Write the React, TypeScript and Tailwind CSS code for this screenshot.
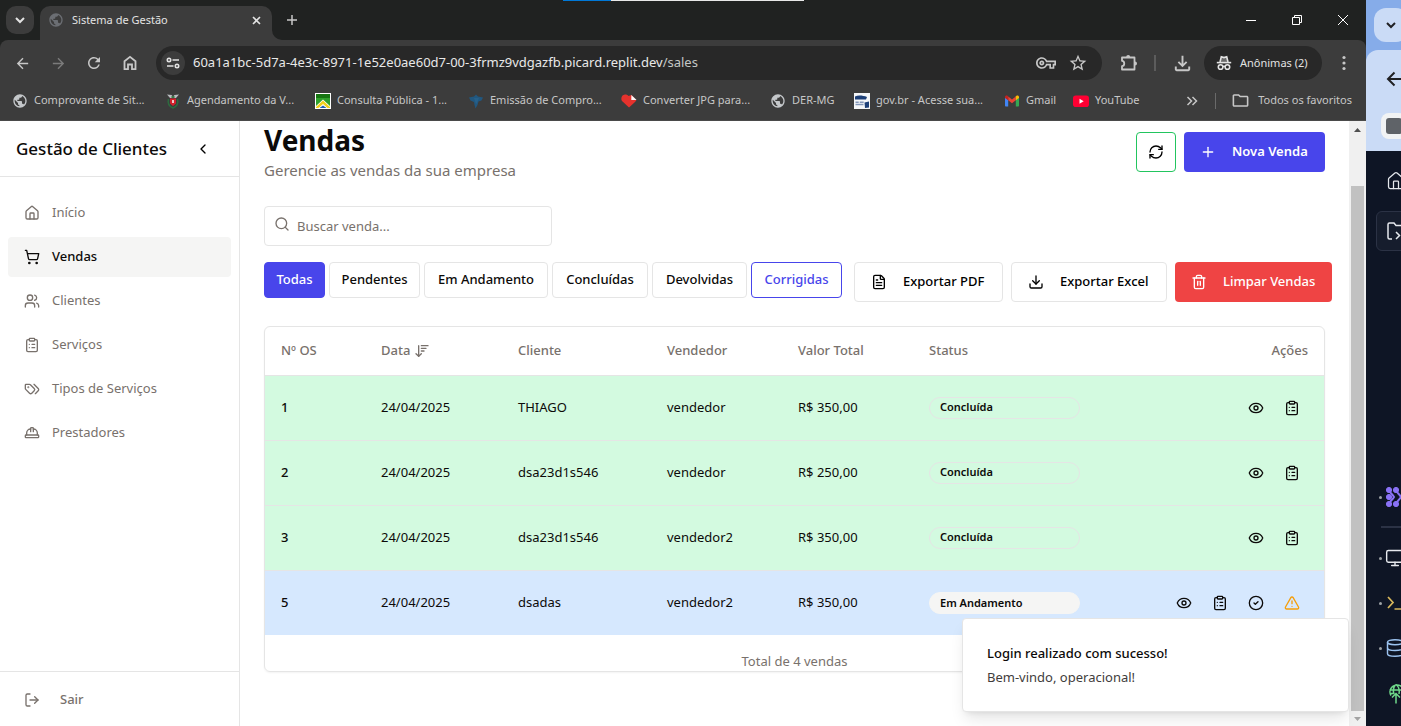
import React from "react";
import {
  ArrowDownWideNarrow,
  ChevronLeft,
  CircleCheck,
  ClipboardList,
  Database,
  Download,
  Eye,
  FileText,
  HardHat,
  House,
  LogOut,
  Monitor,
  Plus,
  RefreshCw,
  Search,
  ShoppingCart,
  Trash2,
  TriangleAlert,
  Users,
} from "lucide-react";
import {
  MdArrowBack,
  MdArrowForward,
  MdOutlineFileDownload,
  MdOutlineFolder,
  MdOutlineVpnKey,
  MdPublic,
  MdRefresh,
  MdStarBorder,
} from "react-icons/md";

function ChevronDownBold() {
  return (
    <svg width="12" height="12" viewBox="0 0 12 12" fill="none" stroke="currentColor" strokeWidth="2">
      <path d="M2 4 6 8l4-4" />
    </svg>
  );
}

function HomeGlyph() {
  return (
    <svg width="14" height="16" viewBox="0 0 14 16" fill="none" stroke="currentColor" strokeWidth="1.800">
      <path d="M1.500 6.200 7 1.800l5.500 4.400v8H9V9.500H5v4.700H1.500z" />
    </svg>
  );
}

function PuzzleGlyph() {
  return (
    <svg width="18" height="18" viewBox="0 0 18 18" fill="none" stroke="currentColor" strokeWidth="1.800" strokeLinejoin="round">
      <path d="M2 3.500h12.500v12H2v-3.300c3 0 3-5.400 0-5.400z" />
      <path d="M6.200 3a2 2 0 0 1 4 0zM15 7.500a2 2 0 0 1 0 4z" fill="currentColor" stroke="none" />
    </svg>
  );
}

function TagsIcon({ size = 16 }: { size?: number }) {
  return (
    <svg width={size} height={size} viewBox="0 0 24 24" fill="none" stroke="currentColor" strokeWidth="2" strokeLinecap="round" strokeLinejoin="round">
      <path d="m15 5 6.300 6.300a2.400 2.400 0 0 1 0 3.400L17 19" />
      <path d="M9.586 5.586A2 2 0 0 0 8.172 5H3a1 1 0 0 0-1 1v5.172a2 2 0 0 0 .586 1.414L8.290 18.290a2.426 2.426 0 0 0 3.420 0l3.580-3.580a2.426 2.426 0 0 0 0-3.420z" />
      <circle cx="6.500" cy="9.500" r=".5" fill="currentColor" />
    </svg>
  );
}

function SiteSettingsGlyph() {
  return (
    <svg width="14" height="12" viewBox="0 0 14 12" fill="none" stroke="currentColor" strokeWidth="1.600">
      <circle cx="3" cy="3" r="1.700" />
      <path d="M6.500 3H13M1 9h6.500" />
      <circle cx="11" cy="9" r="1.700" />
    </svg>
  );
}

function IncognitoGlyph() {
  return (
    <svg width="16" height="16" viewBox="0 0 16 16" fill="none" stroke="currentColor" strokeWidth="1.600">
      <path d="M4 7 5.300 1.800 8 2.600l2.700-.8L12 7" fill="currentColor" fillOpacity="0.35" />
      <path d="M.8 7.600h14.400" />
      <circle cx="4.600" cy="12" r="2.300" />
      <circle cx="11.400" cy="12" r="2.300" />
      <path d="M6.900 11.600c.7-.5 1.500-.5 2.200 0" />
    </svg>
  );
}

function CrestIcon() {
  return (
    <svg width="16" height="16" viewBox="0 0 16 16">
      <path d="M2 1.500 6.500 2 8 3.500 9.500 2 14 1.500 11 5H5z" fill="#b9bcbf" />
      <path d="M3.500 6C2.500 10 4 13.500 8 15c4-1.500 5.500-5 4.500-9" fill="none" stroke="#2d6b3f" strokeWidth="1.500" />
      <path d="M5 5.500h6v5L8 13l-3-2.500z" fill="#d3202b" />
      <path d="M7 7h2v3H7z" fill="#f0c8c8" />
      <path d="M6.500 3h3v2h-3z" fill="#3a7a4a" />
    </svg>
  );
}

function RoadIcon() {
  return (
    <svg width="16" height="16" viewBox="0 0 16 16">
      <path d="M0 0h16v16H0z" fill="#fff" />
      <path d="M1 1h14v14H1z" fill="#2fa12b" />
      <path d="M1 1h14v4H1z" fill="#167512" />
      <path d="M1 13 8 6.500l7 6.500v2H1z" fill="#fff" />
      <path d="M1 14 8 7.500l7 6.500v1h-2.500L8 11l-4.500 4H1z" fill="#f2d21b" />
      <path d="M4.500 15 8 12.600l3.500 2.400z" fill="#1f5fae" />
    </svg>
  );
}

function BlueMapIcon() {
  return (
    <svg width="16" height="16" viewBox="0 0 16 16">
      <path d="M1 4.500 6 3.500 8 1.500l2 2 5 1-1.500 3-3 1L9.500 12 7.500 15.500 6.500 12 6 9 2.500 7.500z" fill="#21577f" />
      <path d="M6 5h5l-2 5-1 1z" fill="#27608a" />
    </svg>
  );
}

function HeartIcon() {
  return (
    <svg width="16" height="16" viewBox="0 0 16 16">
      <path d="M8 14.500 1 8C-.5 6 .5 1.500 4 1.500c2 0 2.500.5 3.500 1.500l3-1 4.800 5c0 .8-.8 1.500-1.300 2z" fill="#e5322d" />
      <path d="M10.300 2 15.600 7h-5.300z" fill="#f7f7f7" />
    </svg>
  );
}

function GovIcon() {
  return (
    <svg width="16" height="16" viewBox="0 0 16 16">
      <path d="M0 0h16v16H0z" fill="#f4f6f8" />
      <path d="M1 3.500C4 2 9 2.500 13 4l-1 2.500H1z" fill="#1c3f78" />
      <path d="M1.500 9.200h3.200M5.700 9.200h4M1.500 11.500h8" stroke="#8296b8" strokeWidth="1.400" />
      <path d="M10.500 9.500 15 8.500v6l-4 .5z" fill="#1c3f78" />
    </svg>
  );
}

function GmailIcon() {
  return (
    <svg width="16" height="16" viewBox="0 0 16 16">
      <path d="M1 4.200v8.600c0 .4.300.7.700.7H4.200V6.800z" fill="#4285f4" />
      <path d="M15 4.200v8.600c0 .4-.3.700-.7.700h-2.500V6.800z" fill="#34a853" />
      <path d="M4.200 3.600 8 6.500l3.800-2.900v3.600L8 10.200 4.200 7.200z" fill="#ea4335" />
      <path d="M1 5V4c0-1.300 1.500-2 2.500-1.200l.7.600v3.800z" fill="#c5221f" />
      <path d="M15 5V4c0-1.300-1.500-2-2.500-1.200l-.7.600v3.800z" fill="#fbbc04" />
    </svg>
  );
}

function YouTubeIcon() {
  return (
    <svg width="16" height="16" viewBox="0 0 16 16">
      <rect y="2.500" width="16" height="11.500" rx="2.800" fill="#ff0033" />
      <path d="M6.500 5.800v5l4.200-2.500z" fill="#fff" />
    </svg>
  );
}

const globe = <MdPublic size={16} className="text-[#c4c7ca]" />;

const bookmarks = [
  { label: "Comprovante de Sit...", icon: globe, width: "w-[153px]" },
  { label: "Agendamento da V...", icon: <CrestIcon />, width: "w-[150px]" },
  { label: "Consulta Pública - 1...", icon: <RoadIcon />, width: "w-[153px]" },
  { label: "Emissão de Compro...", icon: <BlueMapIcon />, width: "w-[153px]" },
  { label: "Converter JPG para...", icon: <HeartIcon />, width: "w-[149px]" },
  { label: "DER-MG", icon: globe, width: "w-[84px]" },
  { label: "gov.br - Acesse sua...", icon: <GovIcon />, width: "w-[150px]" },
  { label: "Gmail", icon: <GmailIcon />, width: "w-[69px]" },
  { label: "YouTube", icon: <YouTubeIcon />, width: "w-[80px]" },
];

function TabStrip() {
  return (
    <div className="flex h-10 shrink-0 items-stretch bg-[#202221]">
      <button aria-label="Pesquisar guias" className="ml-1.5 mt-1.5 flex size-7 items-center justify-center rounded-[10px] bg-[#3c3c3c] text-[#e3e3e3]">
        <ChevronDownBold />
      </button>
      <div className="ml-1.5 mt-1.5 flex w-[232px] items-center rounded-t-[10px] bg-[#3c3c3c] px-2 pb-1.5">
        <MdPublic size={16} className="text-[#6b6e73]" />
        <span className="ml-2 flex-1 text-[11px] text-[#e3e3e3]">Sistema de Gestão</span>
        <button aria-label="Fechar guia" className="flex size-4 items-center justify-center text-[#e3e3e3]">
          <svg width="9" height="9" viewBox="0 0 9 9" stroke="currentColor" strokeWidth="1.600">
            <path d="m1 1 7 7M8 1 1 8" />
          </svg>
        </button>
      </div>
      <svg width="10" height="10" viewBox="0 0 10 10" className="self-end">
        <path d="M0 0v10h10A10 10 0 0 1 0 0z" fill="#3c3c3c" />
      </svg>
      <button aria-label="Nova guia" className="flex w-5 items-center justify-center text-[#c7c7c7]">
        <svg width="12" height="12" viewBox="0 0 12 12" stroke="currentColor" strokeWidth="1.500">
          <path d="M6 1v10M1 6h10" />
        </svg>
      </button>
      <div className="flex-1" />
      <button aria-label="Minimizar" className="flex w-[46px] items-center justify-center">
        <svg width="10" height="10" viewBox="0 0 10 10" stroke="#fff" fill="none">
          <path d="M0 5.500h10" />
        </svg>
      </button>
      <button aria-label="Restaurar" className="flex w-[46px] items-center justify-center">
        <svg width="10" height="10" viewBox="0 0 10 10" stroke="#fff" fill="none">
          <path d="M.5 2.500h7v7h-7zM2.500 2.500v-2h7v7h-2" />
        </svg>
      </button>
      <button aria-label="Fechar" className="flex w-[46px] items-center justify-center">
        <svg width="10" height="10" viewBox="0 0 10 10" stroke="#fff" fill="none">
          <path d="m0 0 10 10M10 0 0 10" />
        </svg>
      </button>
    </div>
  );
}

function Toolbar() {
  return (
    <div className="flex h-[46px] shrink-0 items-center rounded-t-lg bg-[#3c3c3c] pl-1 text-[#c7c7c7]">
      <button aria-label="Voltar" className="flex w-9 justify-center"><MdArrowBack size={17} /></button>
      <button aria-label="Avançar" className="flex w-9 justify-center text-[#7b7b7b]"><MdArrowForward size={17} /></button>
      <button aria-label="Recarregar" className="flex w-9 justify-center"><MdRefresh size={18} /></button>
      <button aria-label="Página inicial" className="flex w-9 justify-center"><HomeGlyph /></button>
      <div className="ml-2 flex h-[34px] flex-1 items-center rounded-full bg-[#282828] pl-[5px] pr-3.5">
        <button aria-label="Informações do site" className="flex size-6 items-center justify-center rounded-full bg-[#3c3c3c] text-[#e3e3e3]">
          <SiteSettingsGlyph />
        </button>
        <span className="ml-2 flex-1 text-[13px] text-[#c4c7c5]">
          <span className="text-[#e8e8e8]">60a1a1bc-5d7a-4e3c-8971-1e52e0ae60d7-00-3frmz9vdgazfb.picard.replit.dev</span>/sales
        </span>
        <MdOutlineVpnKey size={20} />
        <MdStarBorder size={20} className="ml-3" />
      </div>
      <button aria-label="Extensões" className="ml-[18px]"><PuzzleGlyph /></button>
      <span className="ml-4 h-4 w-0.5 bg-[#5c5c5c]" />
      <button aria-label="Downloads" className="ml-[15px]"><MdOutlineFileDownload size={23} /></button>
      <button className="ml-2.5 flex h-[34px] w-[118px] items-center gap-2 rounded-full bg-[#282828] pl-3 text-[11px] text-[#e3e3e3]">
        <IncognitoGlyph />
        Anônimas (2)
      </button>
      <button aria-label="Menu" className="flex w-11 justify-center">
        <svg width="4" height="16" viewBox="0 0 4 16" fill="currentColor">
          <circle cx="2" cy="2.500" r="1.600" />
          <circle cx="2" cy="8" r="1.600" />
          <circle cx="2" cy="13.500" r="1.600" />
        </svg>
      </button>
    </div>
  );
}

function BookmarkBar() {
  return (
    <div className="flex h-[35px] shrink-0 items-center border-b border-[#4a4a4a] bg-[#3c3c3c] pb-[5px] pl-3 text-[11px] text-[#c7c7c7]">
      {bookmarks.map((b) => (
        <a key={b.label} href="#" className={"flex shrink-0 items-center gap-1.5 whitespace-nowrap " + b.width}>
          {b.icon}
          {b.label}
        </a>
      ))}
      <div className="flex-1" />
      <button aria-label="Mais favoritos" className="mr-[17px]">
        <svg width="12" height="10" viewBox="0 0 12 10" fill="none" stroke="currentColor" strokeWidth="1.500">
          <path d="m1.500 1 4 4-4 4M6.500 1l4 4-4 4" />
        </svg>
      </button>
      <span className="h-4 w-px bg-[#6a6a6a]" />
      <button className="ml-[15px] mr-3.5 flex items-center gap-2">
        <MdOutlineFolder size={19} />
        Todos os favoritos
      </button>
    </div>
  );
}

const navItems = [
  { label: "Início", Icon: House, active: false },
  { label: "Vendas", Icon: ShoppingCart, active: true },
  { label: "Clientes", Icon: Users, active: false },
  { label: "Serviços", Icon: ClipboardList, active: false },
  { label: "Tipos de Serviços", Icon: TagsIcon, active: false },
  { label: "Prestadores", Icon: HardHat, active: false },
];

function Sidebar() {
  return (
    <aside className="flex w-60 shrink-0 flex-col border-r border-[#e5e5e5] bg-white">
      <div className="flex h-14 items-center justify-between border-b border-[#e5e5e5] pl-4 pr-7">
        <span className="text-[17px] font-medium text-[#0c0a09]">Gestão de Clientes</span>
        <button aria-label="Recolher menu"><ChevronLeft size={16} /></button>
      </div>
      <nav className="flex flex-1 flex-col gap-1 px-2 py-4">
        {navItems.map(({ label, Icon, active }) => (
          <a
            key={label}
            href="#"
            className={
              "flex h-10 items-center gap-3 rounded px-4 text-[13px] " +
              (active ? "bg-[#f5f5f4] font-medium text-[#0c0a09]" : "text-[#78716c]")
            }
          >
            <Icon size={16} />
            {label}
          </a>
        ))}
      </nav>
      <div className="border-t border-[#e5e5e5] px-2 pb-1.5 pt-2">
        <button className="flex h-10 w-full items-center gap-5 px-4 text-[13px] font-medium text-[#78716c]">
          <LogOut size={16} />
          Sair
        </button>
      </div>
    </aside>
  );
}

const filters = [
  { label: "Todas", look: "w-[61px] border-[#4845eb] bg-[#4845eb] text-white" },
  { label: "Pendentes", look: "w-[91px] border-[#e5e5e5] text-[#0c0a09]" },
  { label: "Em Andamento", look: "w-[124px] border-[#e5e5e5] text-[#0c0a09]" },
  { label: "Concluídas", look: "w-24 border-[#e5e5e5] text-[#0c0a09]" },
  { label: "Devolvidas", look: "w-[95px] border-[#e5e5e5] text-[#0c0a09]" },
  { label: "Corrigidas", look: "w-[91px] border-[#4845eb] text-[#4845eb]" },
];

const sales = [
  { os: 1, client: "THIAGO", seller: "vendedor", total: "R$ 350,00", done: true },
  { os: 2, client: "dsa23d1s546", seller: "vendedor", total: "R$ 250,00", done: true },
  { os: 3, client: "dsa23d1s546", seller: "vendedor2", total: "R$ 350,00", done: true },
  { os: 5, client: "dsadas", seller: "vendedor2", total: "R$ 350,00", done: false },
];

const action = "flex size-8 items-center justify-center";

function SalesTable() {
  return (
    <div className="mt-6 rounded-md border border-[#e5e5e5] shadow-xs">
      <table className="w-full table-fixed text-left text-[13px] text-[#0c0a09]">
        <caption className="mt-4 caption-bottom leading-5 text-[#78716c]">Total de 4 vendas</caption>
        <colgroup>
          <col className="w-[100px]" />
          <col className="w-[137px]" />
          <col className="w-[149px]" />
          <col className="w-[131px]" />
          <col className="w-[131px]" />
          <col className="w-[183px]" />
          <col />
        </colgroup>
        <thead>
          <tr className="h-12 border-b border-[#e5e5e5] text-[#78716c]">
            <th className="px-4 font-medium">Nº OS</th>
            <th className="px-4 font-medium">
              <span className="flex items-center gap-1">
                Data <ArrowDownWideNarrow size={16} />
              </span>
            </th>
            <th className="px-4 font-medium">Cliente</th>
            <th className="px-4 font-medium">Vendedor</th>
            <th className="px-4 font-medium">Valor Total</th>
            <th className="px-4 font-medium">Status</th>
            <th className="px-4 text-right font-medium">Ações</th>
          </tr>
        </thead>
        <tbody>
          {sales.map((s) => (
            <tr
              key={s.os}
              className={s.done ? "h-[65px] border-b border-[#e5e5e5] bg-[#d3fae0]" : "h-[65px] bg-[#d6e8fe]"}
            >
              <td className="px-4 font-medium">{s.os}</td>
              <td className="px-4">24/04/2025</td>
              <td className="px-4">{s.client}</td>
              <td className="px-4">{s.seller}</td>
              <td className="px-4">{s.total}</td>
              <td className="px-4">
                <span
                  className={
                    "flex h-[22px] items-center rounded-full border px-2.5 text-[11px] font-semibold " +
                    (s.done ? "border-[#e5e5e5]" : "border-[#f5f5f4] bg-[#f5f5f4]")
                  }
                >
                  {s.done ? "Concluída" : "Em Andamento"}
                </span>
              </td>
              <td className="px-4">
                <div className="flex justify-end gap-1">
                  <button aria-label="Ver" className={action}><Eye size={16} /></button>
                  <button aria-label="Detalhes" className={action}><ClipboardList size={16} /></button>
                  {!s.done && (
                    <>
                      <button aria-label="Concluir" className={action}><CircleCheck size={16} /></button>
                      <button aria-label="Devolver" className={action + " text-[#f59e0b]"}><TriangleAlert size={16} /></button>
                    </>
                  )}
                </div>
              </td>
            </tr>
          ))}
        </tbody>
      </table>
    </div>
  );
}

function SalesPage() {
  return (
    <main className="min-w-0 flex-1 bg-white px-6 pt-px">
      <div className="flex items-center justify-between">
        <div>
          <h1 className="text-[28px] font-bold leading-9 text-[#0c0a09]">Vendas</h1>
          <p className="text-[15px] leading-6 text-[#78716c]">Gerencie as vendas da sua empresa</p>
        </div>
        <div className="flex gap-2">
          <button aria-label="Atualizar" className="flex size-10 items-center justify-center rounded border border-[#22c55e]">
            <RefreshCw size={16} />
          </button>
          <button className="flex h-10 w-[141px] items-center gap-4 rounded bg-[#4845eb] px-4 text-[13px] font-semibold text-white">
            <Plus size={16} />
            Nova Venda
          </button>
        </div>
      </div>
      <div className="relative mt-6 w-72">
        <Search size={16} className="absolute left-2.5 top-2.5 text-[#78716c]" />
        <input
          aria-label="Buscar venda"
          placeholder="Buscar venda..."
          className="block h-10 w-full rounded border border-[#e5e5e5] pl-8 pr-3 text-[13px] placeholder:text-[#78716c]"
        />
      </div>
      <div className="mt-4 flex items-start gap-3 whitespace-nowrap text-[13px] font-medium">
        <div className="flex gap-1">
          {filters.map((f) => (
            <button key={f.label} className={"h-9 shrink-0 rounded border " + f.look}>
              {f.label}
            </button>
          ))}
        </div>
        <div className="flex gap-2">
          <button className="flex h-10 w-[149px] shrink-0 items-center gap-4 rounded border border-[#e5e5e5] px-4">
            <FileText size={16} />
            Exportar PDF
          </button>
          <button className="flex h-10 w-[156px] shrink-0 items-center gap-4 rounded border border-[#e5e5e5] px-4">
            <Download size={16} />
            Exportar Excel
          </button>
          <button className="flex h-10 w-[157px] shrink-0 items-center gap-4 rounded bg-[#ef4444] px-4 text-white">
            <Trash2 size={16} />
            Limpar Vendas
          </button>
        </div>
      </div>
      <SalesTable />
    </main>
  );
}

function Scrollbar() {
  return (
    <div className="flex w-[17px] shrink-0 flex-col items-center bg-[#f0f0f0]">
      <div className="flex h-[65px] pt-[7px]">
        <svg width="7" height="4" viewBox="0 0 7 4"><path d="M0 4 3.500 0 7 4z" fill="#505050" /></svg>
      </div>
      <div className="w-[13px] flex-1 bg-[#c1c1c1]" />
      <div className="flex h-[15px] items-center">
        <svg width="7" height="4" viewBox="0 0 7 4"><path d="M0 0 3.500 4 7 0z" fill="#a3a3a3" /></svg>
      </div>
    </div>
  );
}

function Toast() {
  return (
    <div role="status" className="absolute bottom-3.5 right-[17px] flex w-[387px] flex-col gap-1 rounded border border-[#e5e5e5] bg-white p-6 shadow-lg">
      <strong className="text-[13px] font-medium leading-5 text-[#0c0a09]">Login realizado com sucesso!</strong>
      <span className="text-[13px] leading-5 text-[#3f3d3c]">Bem-vindo, operacional!</span>
    </div>
  );
}

function Dot() {
  return <span className="mx-[3px] size-[3px] shrink-0 rounded-full bg-[#9da2a6]" />;
}

function NeighbourWindow() {
  return (
    <div className="flex w-[35px] shrink-0 flex-col overflow-hidden bg-[#0e1525]">
      <div className="flex h-[50px] shrink-0 bg-[#86ace9] pl-2 pt-2">
        <div className="flex h-[34px] w-[34px] shrink-0 items-center justify-center rounded-xl bg-[#cadbf6] text-[#202124]">
          <ChevronDownBold />
        </div>
      </div>
      <div className="shrink-0 bg-[#86ace9]">
        <div className="flex h-[101px] flex-col rounded-tl-xl bg-[#cadbf6] pl-[15px] pt-[18px] text-[#202124]">
          <div className="flex h-[22px] items-center pl-[5px]">
            <svg width="16" height="16" viewBox="0 0 16 16" fill="none" stroke="currentColor" strokeWidth="2" className="shrink-0">
              <path d="M8.500 1.500 2 8l6.500 6.500M2 8h14" />
            </svg>
          </div>
          <div className="mt-[23px] flex size-[26px] shrink-0 items-center rounded-lg bg-[#f1f3f4] pl-[5px]">
            <span className="size-4 rounded-[3px] bg-[#5f6368]" />
          </div>
        </div>
      </div>
      <div className="mt-5 flex pl-5 text-[#e6e9ee]"><House size={20} strokeWidth={1.5} className="shrink-0" /></div>
      <div className="mt-5 flex h-10 shrink-0 pl-2.5">
        <div className="flex w-14 shrink-0 items-center rounded-md border border-[#2b3245] bg-[#161d2d] pl-2.5">
          <svg width="20" height="20" viewBox="0 0 20 20" fill="none" stroke="#e6e9ee" strokeWidth="1.500">
            <path d="M5 18H2.500A1.500 1.500 0 0 1 1 16.500v-13A1.500 1.500 0 0 1 2.500 2H7l2 2.500h9" />
            <path d="m9 11 3.500 3.500L9 18M16 17h3" />
          </svg>
        </div>
      </div>
      <div className="mt-[235px] flex h-[22px] shrink-0 items-center pl-2.5">
        <Dot />
        <svg width="22" height="22" viewBox="0 0 22 22" className="shrink-0" fill="#8a72f6" stroke="#8a72f6">
          <circle cx="4" cy="4" r="2.600" /><circle cx="4" cy="11" r="2.600" /><circle cx="4" cy="18" r="2.600" />
          <circle cx="11" cy="4" r="2.600" /><circle cx="11" cy="18" r="2.600" />
          <path d="M4 4c1 3.500 3 3.500 5 7-2 3.500-4 3.500-5 7M11 4c1 3.500 3 3.500 5 7-2 3.500-4 3.500-5 7" fill="none" strokeWidth="2" />
        </svg>
      </div>
      <div className="ml-[15px] mt-[18px] h-0.5 shrink-0 bg-[#2b3245]" />
      <div className="mt-5 flex shrink-0 items-center pl-2.5 text-[#e6e9ee]">
        <Dot /><Monitor size={20} strokeWidth={1.7} className="shrink-0" />
      </div>
      <div className="mt-[25px] flex shrink-0 items-center pl-2.5">
        <Dot />
        <svg width="20" height="20" viewBox="0 0 20 20" fill="none" stroke="#d9b85c" strokeWidth="1.700" className="shrink-0">
          <path d="m3 4 5 5.500L3 15M9.500 16H18" />
        </svg>
      </div>
      <div className="mt-[25px] flex shrink-0 items-center pl-2.5 text-[#9cc3f0]">
        <Dot /><Database size={20} strokeWidth={1.7} className="shrink-0" />
      </div>
      <div className="mt-[25px] flex shrink-0 pl-[22px]">
        <svg width="18" height="22" viewBox="0 0 18 22" fill="none" stroke="#6fd98a" strokeWidth="1.500" className="shrink-0">
          <path d="M3 12.500A7 7 0 1 1 15 12.500M1.500 7h15M2 10.500h4M8 1.500C5 4 5 8 6 11M8 1.500c3.500 2.500 3.500 6.500 3 9.500M8 11v9.500M4 14.500l4-4 4 4" />
        </svg>
      </div>
    </div>
  );
}

export default function App() {
  return (
    <div className="relative flex h-screen overflow-hidden bg-white font-['Noto_Sans',sans-serif]">
      <div className="flex min-w-0 flex-1 flex-col">
        <div className="flex flex-col bg-[#202221]">
          <TabStrip />
          <Toolbar />
          <BookmarkBar />
        </div>
        <div className="relative flex min-h-0 flex-1">
          <Sidebar />
          <SalesPage />
          <Scrollbar />
          <Toast />
        </div>
      </div>
      <NeighbourWindow />
      <div className="absolute left-[563px] top-0 flex h-px w-[241px]">
        <span className="w-12 bg-[#0078d7]" />
        <span className="flex-1 bg-[#e8e8e8]" />
      </div>
    </div>
  );
}
